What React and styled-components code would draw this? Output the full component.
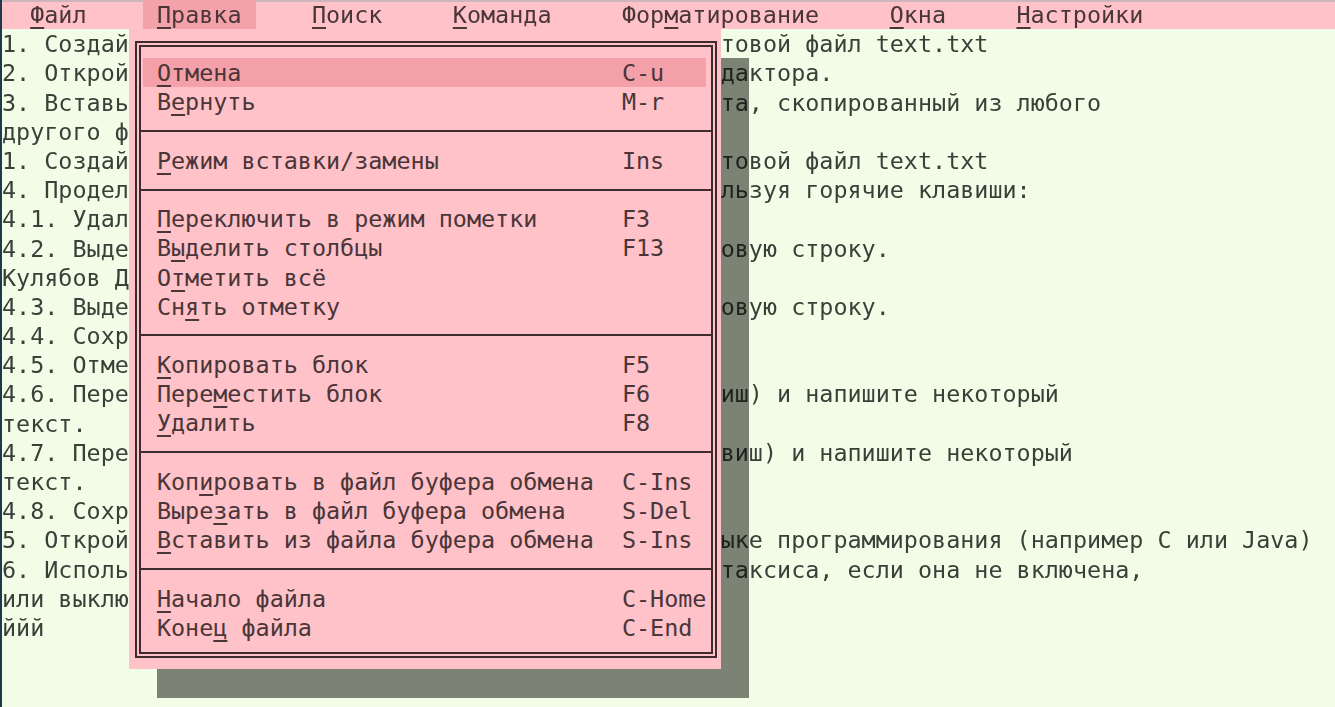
import React from 'react';
import styled, { createGlobalStyle } from 'styled-components';

const ROW = 29.2;

const GlobalStyle = createGlobalStyle`
  html, body {
    margin: 0;
    padding: 0;
    background: #f1fde7;
    overflow: hidden;
  }
  body {
    font-family: 'DejaVu Sans Mono', 'Liberation Mono', monospace;
    font-size: 23.42px;
    line-height: ${ROW + 2}px;
  }
`;

const menuTitles = [
  { text: 'Файл', key: 0 },
  { text: 'Правка', key: 0, active: true },
  { text: 'Поиск', key: 0 },
  { text: 'Команда', key: 0 },
  { text: 'Форматирование', key: 3 },
  { text: 'Окна', key: 0 },
  { text: 'Настройки', key: 0 },
];

// visible parts of each line: left of the menu, and right of it
const editorLines = [
  ['1. Создай', 'товой файл text.txt'],
  ['2. Открой', 'дактора.'],
  ['3. Вставь', 'та, скопированный из любого'],
  ['другого ф', ''],
  ['1. Создай', 'товой файл text.txt'],
  ['4. Продел', 'льзуя горячие клавиши:'],
  ['4.1. Удал', ''],
  ['4.2. Выде', 'овую строку.'],
  ['Кулябов Д', ''],
  ['4.3. Выде', 'овую строку.'],
  ['4.4. Сохр', ''],
  ['4.5. Отме', ''],
  ['4.6. Пере', 'иш) и напишите некоторый'],
  ['текст.', ''],
  ['4.7. Пере', 'виш) и напишите некоторый'],
  ['текст.', ''],
  ['4.8. Сохр', ''],
  ['5. Открой', 'ыке программирования (например C или Java)'],
  ['6. Исполь', 'таксиса, если она не включена,'],
  ['или выклю', ''],
  ['ййй', ''],
];

const menuItems = [
  { label: 'Отмена', key: 0, shortcut: 'C-u', active: true },
  { label: 'Вернуть', key: 1, shortcut: 'M-r' },
  { sep: true },
  { label: 'Режим вставки/замены', key: 0, shortcut: 'Ins' },
  { sep: true },
  { label: 'Переключить в режим пометки', key: 0, shortcut: 'F3' },
  { label: 'Выделить столбцы', key: 1, shortcut: 'F13' },
  { label: 'Отметить всё', key: 1 },
  { label: 'Снять отметку', key: 2 },
  { sep: true },
  { label: 'Копировать блок', key: 0, shortcut: 'F5' },
  { label: 'Переместить блок', key: 4, shortcut: 'F6' },
  { label: 'Удалить', key: 0, shortcut: 'F8' },
  { sep: true },
  { label: 'Копировать в файл буфера обмена', key: 3, shortcut: 'C-Ins' },
  { label: 'Вырезать в файл буфера обмена', key: 4, shortcut: 'S-Del' },
  { label: 'Вставить из файла буфера обмена', key: 0, shortcut: 'S-Ins' },
  { sep: true },
  { label: 'Начало файла', key: 0, shortcut: 'C-Home' },
  { label: 'Конец файла', key: 4, shortcut: 'C-End' },
];

function Hotkey({ text, at }) {
  return (
    <>
      {text.slice(0, at)}
      <Key>{text[at]}</Key>
      {text.slice(at + 1)}
    </>
  );
}

function App() {
  return (
    <>
      <GlobalStyle />
      <Screen>
        <MenuBar>
          {menuTitles.map(t => (
            <MenuTitle key={t.text} $active={t.active}>
              <Hotkey text={t.text} at={t.key} />
            </MenuTitle>
          ))}
        </MenuBar>
        <Editor>
          {editorLines.map(([head, tail], i) => (
            <Line key={i}>
              <Head>{head}</Head>
              {tail && <span>{tail}</span>}
            </Line>
          ))}
        </Editor>
        <Shadow />
        <Dropdown>
          <Frame>
            {menuItems.map((it, i) =>
              it.sep ? (
                <Separator key={i} />
              ) : (
                <Item key={i} $active={it.active}>
                  <Label>
                    <Hotkey text={it.label} at={it.key} />
                  </Label>
                  <Shortcut>{it.shortcut}</Shortcut>
                </Item>
              )
            )}
          </Frame>
        </Dropdown>
      </Screen>
    </>
  );
}

const Screen = styled.div`
  position: relative;
  width: 100vw;
  height: 100vh;
  box-sizing: border-box;
  border-left: 2px solid #1e3a4a;
  overflow: hidden;
  color: #3b3f39;
`;

const MenuBar = styled.div`
  display: flex;
  gap: 3ch;
  height: ${ROW}px;
  padding-left: 1ch;
  background: #fec2c8;
  box-shadow: inset 0 2px 0 #cdb6b9;
  color: #4a3538;
  white-space: pre;
`;

const MenuTitle = styled.span`
  padding: 0 1ch;
  height: ${ROW}px;
  background: ${p => (p.$active ? '#f4a2a9' : 'transparent')};
`;

const Key = styled.span`
  text-decoration: underline;
  text-decoration-thickness: 2px;
  text-underline-offset: 4px;
`;

const Editor = styled.div`
  white-space: pre;
`;

const Line = styled.div`
  display: flex;
  height: ${ROW}px;
`;

const Head = styled.span`
  width: 51ch;
  flex: none;
`;

const Shadow = styled.div`
  position: absolute;
  left: 11ch;
  top: ${ROW * 2}px;
  width: 42ch;
  height: 640px;
  background: #838480;
  mix-blend-mode: multiply;
`;

const Dropdown = styled.div`
  position: absolute;
  left: 9ch;
  top: ${ROW}px;
  width: 42ch;
  box-sizing: border-box;
  padding: 12px 4px 11px 6px;
  background: #fec2c8;
  color: #4a3538;
`;

const Frame = styled.div`
  border: 6px double #3e2b2e;
  padding: 11px 5px 10px 2px;
`;

const Item = styled.div`
  display: flex;
  height: ${ROW}px;
  padding-left: 1ch;
  white-space: pre;
  background: ${p => (p.$active ? '#f4a0a8' : 'transparent')};
`;

const Label = styled.span`
  width: 33ch;
  flex: none;
`;

const Shortcut = styled.span`
  flex: none;
`;

const Separator = styled.div`
  height: ${ROW}px;
  margin: 0 -5px 0 -2px;
  display: flex;
  align-items: center;
  &::before {
    content: '';
    flex: 1;
    border-top: 2px solid #3e2b2e;
  }
`;

export default App;
